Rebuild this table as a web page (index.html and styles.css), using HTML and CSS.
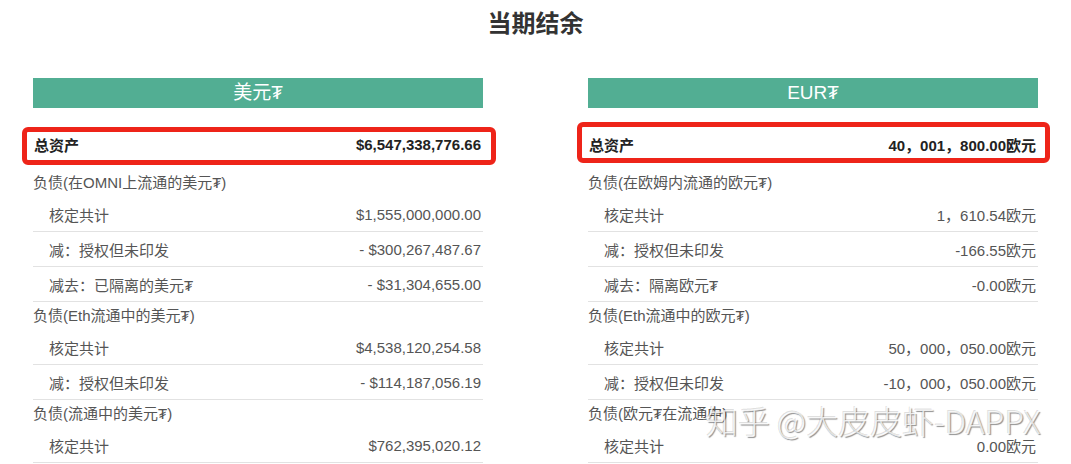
FILE: index.html
```html
<!DOCTYPE html>
<html lang="zh">
<head>
<meta charset="utf-8">
<link rel="stylesheet" href="styles.css">
</head>
<body>
<h1 class="title">当期结余</h1>
<div class="cols">
  <section class="col">
    <div class="col-head">美元₮</div>
    <div class="total"><span>总资产</span><span>$6,547,338,776.66</span><div class="mark"></div></div>
    <div class="group">负债(在OMNI上流通的美元₮)</div>
    <div class="item"><span>核定共计</span><span>$1,555,000,000.00</span></div>
    <div class="item"><span>减：授权但未印发</span><span>- $300,267,487.67</span></div>
    <div class="item"><span>减去：已隔离的美元₮</span><span>- $31,304,655.00</span></div>
    <div class="group">负债(Eth流通中的美元₮)</div>
    <div class="item"><span>核定共计</span><span>$4,538,120,254.58</span></div>
    <div class="item"><span>减：授权但未印发</span><span>- $114,187,056.19</span></div>
    <div class="group">负债(流通中的美元₮)</div>
    <div class="item"><span>核定共计</span><span>$762,395,020.12</span></div>
  </section>
  <section class="col">
    <div class="col-head">EUR₮</div>
    <div class="total"><span>总资产</span><span>40，001，800.00欧元</span><div class="mark mark-right"></div></div>
    <div class="group">负债(在欧姆内流通的欧元₮)</div>
    <div class="item"><span>核定共计</span><span>1，610.54欧元</span></div>
    <div class="item"><span>减：授权但未印发</span><span>-166.55欧元</span></div>
    <div class="item"><span>减去：隔离欧元₮</span><span>-0.00欧元</span></div>
    <div class="group">负债(Eth流通中的欧元₮)</div>
    <div class="item"><span>核定共计</span><span>50，000，050.00欧元</span></div>
    <div class="item"><span>减：授权但未印发</span><span>-10，000，050.00欧元</span></div>
    <div class="group">负债(欧元₮在流通中)</div>
    <div class="item"><span>核定共计</span><span>0.00欧元</span></div>
  </section>
</div>
<div class="watermark">知乎 @大皮皮虾-DAPPX</div>
</body>
</html>
```
FILE: styles.css
```css
html, body {
  margin: 0;
  padding: 0;
  background: #ffffff;
}
body {
  width: 1071px;
  height: 464px;
  overflow: hidden;
  position: relative;
  font-family: "Liberation Sans", "Noto Sans CJK SC", "DejaVu Sans", sans-serif;
  color: #555555;
  font-size: 15px;
}
.title {
  margin: 0;
  height: 78px;
  padding-top: 6px;
  box-sizing: border-box;
  line-height: 32px;
  text-align: center;
  font-family: "Noto Sans CJK SC", sans-serif;
  font-size: 24px;
  font-weight: 700;
  color: #333333;
}
.cols {
  display: grid;
  grid-template-columns: 450px 450px;
  column-gap: 105px;
  padding: 0 33px;
}
.col {
  display: flex;
  flex-direction: column;
}
.col-head {
  height: 30px;
  line-height: 30px;
  background: #52ae93;
  color: #ffffff;
  text-align: center;
  font-size: 19px;
}
.total {
  position: relative;
  margin: 18px 0 7px;
  height: 36px;
  display: flex;
  justify-content: space-between;
  align-items: center;
  padding: 0 2px 0 1px;
  font-weight: 700;
  color: #222222;
  font-size: 15px;
}
.mark {
  position: absolute;
  left: -11px;
  right: -13px;
  top: 1px;
  bottom: -3px;
  border: 5px solid #ee2419;
  border-radius: 6px;
}
.mark-right {
  left: -11px;
  right: -12px;
  top: -4px;
  bottom: -1px;
}
.group {
  height: 28px;
  line-height: 28px;
  padding-left: 0;
}
.item {
  height: 34px;
  border-bottom: 1px solid #e2e2e2;
  display: flex;
  justify-content: space-between;
  align-items: center;
  padding: 0 2px 0 16px;
}
.watermark {
  position: absolute;
  left: 706px;
  top: 404px;
  font-family: "Noto Sans CJK SC", sans-serif;
  font-weight: 300;
  font-size: 32px;
  line-height: 32px;
  color: rgba(255, 255, 255, 0.75);
  text-shadow: 1px 1px 1px rgba(0, 0, 0, 0.45), -1px -1px 0 rgba(0, 0, 0, 0.12);
  white-space: nowrap;
}
```
